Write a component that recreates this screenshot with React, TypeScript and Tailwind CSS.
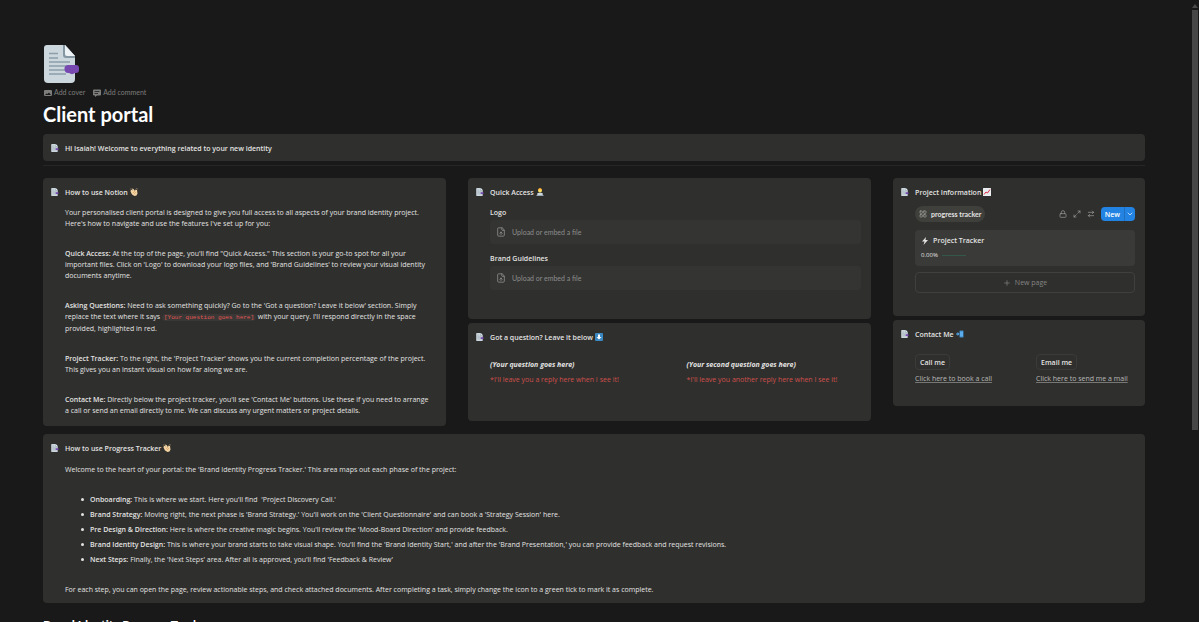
import React from 'react';
import { ArrowRightLeft, ChevronDown, FileUp, LayoutGrid, Lock, Maximize2, Plus } from 'lucide-react';

const PageIcon: React.FC<{ className: string }> = ({ className }) => (
  <svg viewBox="0 0 36 38" className={className} aria-hidden="true">
    <path d="M3 0h18l10 11v23a4 4 0 0 1-4 4H4a4 4 0 0 1-4-4V3a3 3 0 0 1 3-3z" fill="#ccd6dd" />
    <path d="M19 0h2l10 11v2H22a3 3 0 0 1-3-3z" fill="#8497a3" />
    <path d="M21 0l10 11h-8a2 2 0 0 1-2-2z" fill="#eef3f6" />
    <path d="M5 8.500h9M5 13h9M5 17h21M5 21h21M5 25h21M5 29h17" stroke="#8c9eaa" strokeWidth="1.400" />
    <path d="M24 20h8a3 3 0 0 1 3 3v2a3 3 0 0 1-3 3h-1a5 5 0 0 1-6 0 4 4 0 0 1-1-8z" fill="#7648b0" />
  </svg>
);

const ClapIcon = () => (
  <svg viewBox="0 0 16 16" className="size-2" aria-hidden="true">
    <path d="M2 3l3 2-1-4 3 1 3 4 1-3 3 1 1 7-2 4-4 1-5-3-3-6z" fill="#f3d2a2" />
    <path d="M6 8l4 4M8 6l4 4" stroke="#c58c55" />
    <path d="M2 1L0 3M13 1l2 1" stroke="#d9b887" strokeWidth="1.500" />
  </svg>
);

const TechnologistIcon = () => (
  <svg viewBox="0 0 16 16" className="size-2" aria-hidden="true">
    <path d="M2 15c0-4 2-6 6-6s6 2 6 6z" fill="#7f8f9a" />
    <circle cx="8" cy="5" r="4" fill="#ffdc5d" />
    <path d="M4 4c0-5 8-5 8 0L10 3H6z" fill="#ffac33" />
    <path d="M3 10h10v5H3z" fill="#ccd6dd" />
    <path d="M1 14h14v2H1z" fill="#99aab5" />
  </svg>
);

const DownIcon = () => (
  <svg viewBox="0 0 16 16" className="size-2" aria-hidden="true">
    <rect width="16" height="16" rx="2" fill="#3b88c3" />
    <path d="M6 3h4v5h3l-5 5-5-5h3z" fill="#fff" />
  </svg>
);

const ChartIcon = () => (
  <svg viewBox="0 0 16 16" className="size-2" aria-hidden="true">
    <rect width="16" height="16" rx="1" fill="#f1f4f6" />
    <path d="M4 0v16M8 0v16M12 0v16M0 4h16M0 8h16M0 12h16" stroke="#c5d0d8" strokeWidth="0.500" />
    <path d="M2 13l4-5 3 2 5-7" fill="none" stroke="#dd2e44" strokeWidth="2" />
  </svg>
);

const PhoneIcon = () => (
  <svg viewBox="0 0 16 16" className="size-2" aria-hidden="true">
    <rect x="7" y="1" width="8" height="14" rx="1" fill="#3b88c3" />
    <rect x="8" y="3" width="6" height="10" fill="#5dadec" />
    <path d="M0 7h3V4l4 4-4 4V9H0z" fill="#55acee" />
  </svg>
);

interface CalloutProps {
  title: string;
  emoji?: React.ReactNode;
  className?: string;
  children?: React.ReactNode;
}

const Callout: React.FC<CalloutProps> = ({ title, emoji, className = '', children }) => (
  <section className={`flex items-start gap-1.5 rounded bg-[#2f2f2e] pl-2 pr-2.5 pt-2 ${className}`}>
    <div className="flex h-3 w-2 shrink-0 items-center">
      <PageIcon className="size-2" />
    </div>
    <div className="min-w-0 flex-1">
      <h2 className="flex h-3 items-center gap-0.5 font-semibold">
        {title}
        {emoji}
      </h2>
      {children}
    </div>
  </section>
);

const UploadBlock: React.FC<{ label: string }> = ({ label }) => (
  <div>
    <h3 className="font-semibold">{label}</h3>
    <button
      title={label}
      className="mt-0.5 flex h-6 w-full items-center gap-1.5 rounded-sm bg-[#343433] px-1.5 font-[Lato,sans-serif] text-[#8d8d8b]"
    >
      <FileUp className="size-2.5" />
      Upload or embed a file
    </button>
  </div>
);

const steps = [
  { name: 'Onboarding:', text: "This is where we start. Here you'll find \u00a0'Project Discovery Call.'" },
  { name: 'Brand Strategy:', text: "Moving right, the next phase is 'Brand Strategy.' You'll work on the 'Client Questionnaire' and can book a 'Strategy Session' here." },
  { name: 'Pre Design & Direction:', text: "Here is where the creative magic begins. You'll review the 'Mood-Board Direction' and provide feedback." },
  { name: 'Brand Identity Design:', text: "This is where your brand starts to take visual shape. You'll find the 'Brand Identity Start,' and after the 'Brand Presentation,' you can provide feedback and request revisions." },
  { name: 'Next Steps:', text: "Finally, the 'Next Steps' area. After all is approved, you'll find 'Feedback & Review'" }
];

const questions = [
  { question: '(Your question goes here)', reply: "*I'll leave you a reply here when I see it!" },
  { question: '(Your second question goes here)', reply: "*I'll leave you another reply here when I see it!" }
];

const contacts = [
  { action: 'Call me', link: 'Click here to book a call' },
  { action: 'Email me', link: 'Click here to send me a mail' }
];

const App: React.FC = () => {
  return (
    <div className="flex h-screen overflow-hidden bg-[#191919] font-['Open_Sans',sans-serif] text-[7px] leading-[11px] text-[#e3e3e1]">
      <main className="min-w-0 flex-1 pl-[43px] pr-[46px] pt-[45px]">
        {/* Page header */}
        <div className="pl-px">
          <PageIcon className="h-[38px] w-9" />
          <div className="mt-1 flex gap-2 font-[Lato,sans-serif] text-[#7d7d7b]">
            <button className="flex items-center gap-0.5">
              <svg viewBox="0 0 16 16" className="size-2" aria-hidden="true">
                <path fillRule="evenodd" d="M2 2h12a2 2 0 0 1 2 2v8a2 2 0 0 1-2 2H2a2 2 0 0 1-2-2V4a2 2 0 0 1 2-2zm0 10h12l-4-5-3 3-2-1z" fill="currentColor" />
              </svg>
              Add cover
            </button>
            <button className="flex items-center gap-0.5">
              <svg viewBox="0 0 16 16" className="size-2" aria-hidden="true">
                <path fillRule="evenodd" d="M2 1h12a2 2 0 0 1 2 2v8a2 2 0 0 1-2 2H8l-4 3v-3H2a2 2 0 0 1-2-2V3a2 2 0 0 1 2-2zm1 3v1.500h10V4zm0 4v1.500h7V8z" fill="currentColor" />
              </svg>
              Add comment
            </button>
          </div>
        </div>
        <h1 className="mt-1 font-[Lato,sans-serif] text-xl leading-6 font-bold text-white">Client portal</h1>

        <Callout title="Hi Isaiah! Welcome to everything related to your new identity" className="mt-2 pb-[7px]" />
        <hr className="mt-1 border-[#262626]" />

        <div className="mt-3 grid grid-cols-[8fr_8fr_5fr] items-start gap-x-[22px]">
          <Callout title="How to use Notion" emoji={<ClapIcon />} className="pb-2.5">
            <div className="mt-[9px] space-y-[19px] pr-1.5">
              <p>
                Your personalised client portal is designed to give you full access to all aspects of your brand identity project. Here's how to navigate and use the features I've set up for you:
              </p>
              <p>
                <strong className="font-semibold">Quick Access:</strong> At the top of the page, you'll find "Quick Access." This section is your go-to spot for all your important files. Click on 'Logo' to download your logo files, and 'Brand Guidelines' to review your visual identity documents anytime.
              </p>
              <p>
                <strong className="font-semibold">Asking Questions:</strong> Need to ask something quickly? Go to the 'Got a question? Leave it below' section. Simply replace the text where it says{' '}
                <code className="rounded-sm bg-[#393837] px-0.5 font-['Liberation_Mono',monospace] text-[6px] text-[#e35650]">[Your question goes here]</code>{' '}
                with your query. I'll respond directly in the space provided, highlighted in red.
              </p>
              <p>
                <strong className="font-semibold">Project Tracker:</strong> To the right, the 'Project Tracker' shows you the current completion percentage of the project. This gives you an instant visual on how far along we are.
              </p>
              <p>
                <strong className="font-semibold">Contact Me:</strong> Directly below the project tracker, you'll see 'Contact Me' buttons. Use these if you need to arrange a call or send an email directly to me. We can discuss any urgent matters or project details.
              </p>
            </div>
          </Callout>

          <div className="space-y-1">
            <Callout title="Quick Access" emoji={<TechnologistIcon />} className="pb-[29px]">
              <div className="mt-[9px] space-y-[9px]">
                <UploadBlock label="Logo" />
                <UploadBlock label="Brand Guidelines" />
              </div>
            </Callout>

            <Callout title="Got a question? Leave it below" emoji={<DownIcon />} className="pb-9">
              <div className="mt-4 grid grid-cols-2 gap-x-[22px]">
                {questions.map((item) => (
                  <div key={item.question} className="space-y-1">
                    <p className="font-bold italic">{item.question}</p>
                    <p className="text-[#cf4f4b]">{item.reply}</p>
                  </div>
                ))}
              </div>
            </Callout>
          </div>

          <div className="space-y-1">
            <Callout title="Project Information" emoji={<ChartIcon />} className="pb-[23px]">
              <div className="mt-2 flex items-center justify-between">
                <button className="flex h-4 items-center gap-1 rounded-full bg-[#3f3f3c] px-1 font-[Lato,sans-serif] font-bold">
                  <LayoutGrid className="size-2 text-[#a5a5a2]" />
                  progress tracker
                </button>
                <div className="flex items-center gap-1.5 text-[#a0a09d]">
                  <button aria-label="Lock"><Lock className="size-2" /></button>
                  <button aria-label="Expand"><Maximize2 className="size-2" /></button>
                  <button aria-label="Settings"><ArrowRightLeft className="size-2" /></button>
                  <div className="flex h-3.5 items-center rounded-sm bg-[#2383e2] font-semibold text-white">
                    <button className="h-full px-1">New</button>
                    <button aria-label="More options" className="h-full border-l border-[#1f6fbe] px-px">
                      <ChevronDown className="size-2" />
                    </button>
                  </div>
                </div>
              </div>

              <article className="mt-2 h-9 rounded bg-[#3a3a39] px-1.5 pt-[5px]">
                <h3 className="flex items-center gap-1 font-semibold">
                  <svg viewBox="0 0 16 16" className="size-2" aria-hidden="true">
                    <path d="M10 0L2 9h5l-2 7 9-10H9z" fill="currentColor" />
                  </svg>
                  Project Tracker
                </h3>
                <div className="mt-1 flex items-center gap-1 text-[6px]">
                  0.00%
                  <span className="h-px w-6 bg-[#31584a]"></span>
                </div>
              </article>
              <button className="mt-1.5 flex h-[21px] w-full items-center justify-center gap-1 rounded border border-[#40403e] text-[#858583]">
                <Plus className="size-2" />
                New page
              </button>
            </Callout>

            <Callout title="Contact Me" emoji={<PhoneIcon />} className="pb-[22px]">
              <div className="mt-3.5 grid grid-cols-2 gap-x-[22px]">
                {contacts.map((contact) => (
                  <div key={contact.action}>
                    <button className="h-4 rounded-sm border border-[#3b3b3a] px-1 font-semibold leading-none">{contact.action}</button>
                    <a href="#contact" className="mt-[3px] block whitespace-nowrap text-[#b9b9b6] underline decoration-[#777775] underline-offset-1">{contact.link}</a>
                  </div>
                ))}
              </div>
            </Callout>
          </div>
        </div>

        <Callout title="How to use Progress Tracker" emoji={<ClapIcon />} className="mt-2 pb-2">
          <p className="mt-2.5">
            Welcome to the heart of your portal: the 'Brand Identity Progress Tracker.' This area maps out each phase of the project:
          </p>
          <ul className="mt-[19px] space-y-1 pl-4">
            {steps.map((step) => (
              <li key={step.name} className="flex items-center gap-1.5">
                <span className="size-[3px] shrink-0 rounded-full bg-current"></span>
                <span>
                  <strong className="font-semibold">{step.name}</strong> {step.text}
                </span>
              </li>
            ))}
          </ul>
          <p className="mt-[19px]">
            For each step, you can open the page, review actionable steps, and check attached documents. After completing a task, simply change the icon to a green tick to mark it as complete.
          </p>
        </Callout>

        <h2 className="mt-3.5 font-[Lato,sans-serif] text-xs leading-4 font-bold text-white">Brand Identity Progress Tracker</h2>
      </main>

      {/* Scrollbar */}
      <div className="flex w-2 shrink-0 flex-col items-center gap-0.5 pt-1" aria-hidden="true">
        <svg viewBox="0 0 8 4" className="h-1 w-2">
          <path d="M4 0l3 4H1z" fill="#4a4a4a" />
        </svg>
        <div className="h-[68%] w-1.5 bg-[#474747]"></div>
      </div>
    </div>
  );
};

export default App;
